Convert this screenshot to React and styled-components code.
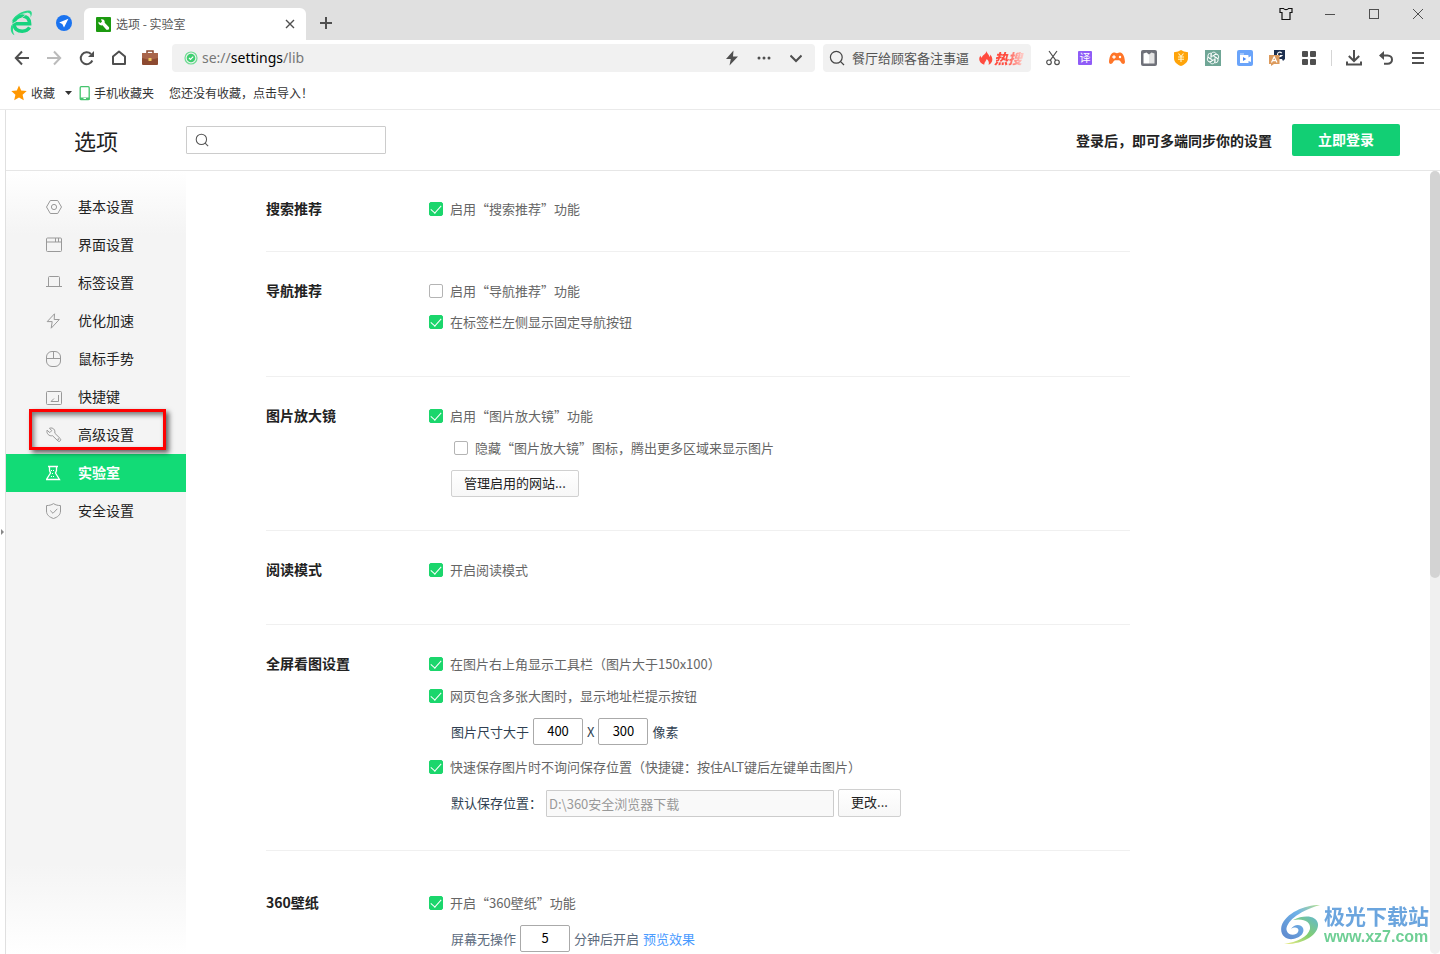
import React from "react";
import styled, { createGlobalStyle } from "styled-components";

const GlobalStyle = createGlobalStyle`
  * {
    box-sizing: border-box;
  }
  body {
    margin: 0;
    background: #fff;
    color: #222;
    font-family: "Noto Sans CJK SC", "Noto Sans", sans-serif;
    font-size: 13px;
    line-height: 20px;
  }
  button,
  input {
    font: inherit;
    color: inherit;
  }
  svg {
    display: block;
    flex: none;
  }
`;

const Window = styled.div`
  display: flex;
  flex-direction: column;
  height: 100vh;
  overflow: hidden;
`;

/* ---------- browser chrome ---------- */

const TabBar = styled.div`
  display: flex;
  height: 40px;
  background: #e0e0e0;
  padding-left: 6px;
`;

const IconButton = styled.button`
  width: ${(props) => props.$width || 32}px;
  height: ${(props) => props.$height || 28}px;
  display: flex;
  align-items: center;
  justify-content: center;
  flex: none;
  padding: 0;
  border: 0;
  background: none;
  color: ${(props) => props.$color || "#4f4f4f"};
  cursor: pointer;
`;

const PinnedTabs = styled.div`
  display: flex;
  align-items: center;
  gap: 12px;
  padding-top: 6px;
  width: 78px;
`;

const Tab = styled.div`
  display: flex;
  align-items: center;
  width: 222px;
  height: 32px;
  margin-top: 8px;
  padding-left: 12px;
  gap: 5px;
  border-radius: 6px 6px 0 0;
  background: #fff;
  font-size: 12px;
  color: #555;
`;

const TabTitle = styled.span`
  flex: 1;
`;

const NewTab = styled.div`
  padding: 9px 0 0 4px;
  flex: 1;
`;

const WindowButtons = styled.div`
  display: flex;
`;

const Toolbar = styled.div`
  display: flex;
  align-items: center;
  height: 36px;
  padding: 0 6px;
`;

const AddressBar = styled.div`
  display: flex;
  align-items: center;
  flex: 1;
  height: 28px;
  margin: 0 8px 0 6px;
  padding: 0 3px 0 12px;
  border-radius: 4px;
  background: #f1f1f1;
`;

const Url = styled.span`
  flex: 1;
  padding-left: 4px;
  font-family: "Noto Sans", sans-serif;
  font-size: 14px;
  color: #777;
  b {
    font-weight: normal;
    color: #000;
  }
`;

const QuickSearch = styled.label`
  display: flex;
  align-items: center;
  width: 208px;
  height: 28px;
  margin-right: 6px;
  padding-left: 6px;
  gap: 7px;
  border-radius: 4px;
  background: #f1f1f1;
  color: #444;
`;

const QuickSearchInput = styled.input`
  width: 120px;
  padding: 0;
  border: 0;
  outline: none;
  background: none;
  &::placeholder {
    color: #555;
    opacity: 1;
  }
`;

const HotBadge = styled.span`
  display: flex;
  align-items: center;
  gap: 1px;
  font-size: 14px;
  font-weight: 900;
  font-style: italic;
`;

const HotText = styled.span`
  padding-right: 2px;
  background: linear-gradient(90deg, #ff4b3e 40%, #ffd2ce);
  background-clip: text;
  color: transparent;
`;

const ToolbarDivider = styled.span`
  width: 1px;
  height: 16px;
  margin: 0 6px;
  background: #d5d5d5;
`;

const BookmarkBar = styled.div`
  display: flex;
  align-items: center;
  height: 34px;
  padding-left: 11px;
  border-bottom: 1px solid #eaeaea;
  font-size: 12px;
`;

const Bookmark = styled.a`
  display: flex;
  align-items: center;
  gap: 4px;
  margin-right: ${(props) => props.$space || 0}px;
  color: #333;
  text-decoration: none;
`;

/* ---------- settings page ---------- */

const Page = styled.div`
  display: flex;
  flex: 1;
  min-height: 0;
`;

const EdgeStrip = styled.button`
  display: flex;
  align-items: center;
  width: 6px;
  padding: 0;
  border: 0;
  border-right: 1px solid #e0e0e0;
  background: #fff;
`;

const Settings = styled.div`
  display: flex;
  flex-direction: column;
  flex: 1;
  min-width: 0;
`;

const Header = styled.header`
  display: flex;
  align-items: center;
  flex: none;
  height: 61px;
  padding: 0 40px 0 68px;
  border-bottom: 1px solid #e6e6e6;
`;

const Title = styled.h1`
  margin: 0 68px 0 0;
  font-size: 22px;
  line-height: 32px;
  font-weight: normal;
`;

const SearchBox = styled.label`
  display: flex;
  align-items: center;
  width: 200px;
  height: 28px;
  padding: 0 8px;
  gap: 6px;
  border: 1px solid #ccc;
  border-radius: 1px;
  color: #555;
  input {
    flex: 1;
    min-width: 0;
    border: 0;
    outline: none;
    background: none;
  }
`;

const LoginHint = styled.span`
  margin: 0 20px 0 auto;
  font-size: 14px;
  font-weight: bold;
`;

const LoginButton = styled.button`
  width: 108px;
  height: 32px;
  padding: 0 0 2px;
  border: 0;
  border-radius: 2px;
  background: #12cf74;
  color: #fff;
  font-size: 14px;
  font-weight: bold;
  cursor: pointer;
`;

const Body = styled.div`
  display: flex;
  flex: 1;
  min-height: 0;
`;

const Sidebar = styled.nav`
  flex: none;
  width: 180px;
  padding-top: 17px;
  background: linear-gradient(
    #fff,
    #f4f4f4 64px,
    #f4f4f4 calc(100% - 90px),
    #fff
  );
`;

const NavItem = styled.a`
  position: relative;
  display: flex;
  align-items: center;
  height: 38px;
  padding-left: 40px;
  gap: 16px;
  font-size: 14px;
  text-decoration: none;
  color: ${(props) => (props.$active ? "#fff" : "#222")};
  font-weight: ${(props) => (props.$active ? "bold" : "normal")};
  background: ${(props) => (props.$active ? "#12db76" : "none")};
  svg {
    color: ${(props) => (props.$active ? "#fff" : "#999")};
  }
`;

const NavText = styled.span`
  padding-bottom: 2px;
`;

const Highlight = styled.span`
  position: absolute;
  z-index: 1;
  top: -7px;
  left: 23px;
  width: 137px;
  height: 41px;
  border: 3px solid #fe0000;
  box-shadow: 3px 3px 5px rgba(0, 0, 0, 0.6),
    inset 2px 3px 5px rgba(0, 0, 0, 0.5);
  pointer-events: none;
`;

const Content = styled.main`
  flex: 1;
  min-width: 0;
  overflow: hidden;
  padding-left: 80px;
`;

const Section = styled.section`
  display: flex;
  max-width: 864px;
  padding-top: ${(props) => props.$top || 29}px;
  padding-bottom: ${(props) => props.$bottom || 44}px;
  & + & {
    border-top: 1px solid #f0f0f0;
  }
`;

const SectionTitle = styled.h2`
  width: 163px;
  margin: 0;
  font-size: 14px;
  line-height: 18px;
  font-weight: bold;
`;

const Options = styled.div`
  display: flex;
  flex-direction: column;
  align-items: flex-start;
  gap: ${(props) => props.$gap || 12}px;
`;

const CheckLabel = styled.label`
  display: flex;
  align-items: center;
  gap: 7px;
  margin-left: ${(props) => (props.$nested ? 25 : 0)}px;
  color: #666;
`;

const CheckInput = styled.input`
  appearance: none;
  display: flex;
  justify-content: center;
  width: 14px;
  height: 14px;
  margin: 0;
  border: 1px solid #b4b4b4;
  border-radius: 2px;
  background: #fff;
  &:checked {
    border-color: #1bd66c;
    background: #1bd66c;
  }
  &:checked::after {
    content: "";
    width: 5px;
    height: 9px;
    border: solid #fff;
    border-width: 0 1px 1px 0;
    transform: rotate(42deg);
  }
`;

const Line = styled.div`
  display: flex;
  align-items: center;
  gap: 4px;
  margin-left: 22px;
  color: ${(props) => props.$color || "#2f3f52"};
`;

const NumberInput = styled.input`
  width: 50px;
  height: 27px;
  padding: 0 0 2px;
  border: 1px solid #aaa;
  border-radius: 2px;
  text-align: center;
  color: #000;
`;

const PathInput = styled.input`
  width: 288px;
  height: 27px;
  padding: 0 2px;
  border: 1px solid #ccc;
  border-radius: 1px;
  background: #f9f9f9;
  color: #999;
`;

const PlainButton = styled.button`
  height: ${(props) => props.$height || 28}px;
  padding: 0 12px 2px;
  border: 1px solid #d0d0d0;
  border-radius: 2px;
  background: linear-gradient(#fff, #f7f7f7);
  color: #222;
  cursor: pointer;
`;

const PreviewLink = styled.a`
  color: #4a9bff;
  text-decoration: none;
`;

const ScrollTrack = styled.div`
  width: 10px;
  border-radius: 5px;
  background: #f0f0f0;
`;

const ScrollThumb = styled.div`
  height: 52%;
  border-radius: 5px;
  background: #d3d3d3;
`;

const Watermark = styled.div`
  position: fixed;
  right: 11px;
  bottom: 7px;
  display: flex;
  align-items: center;
  gap: 4px;
  pointer-events: none;
`;

const WatermarkName = styled.div`
  font-size: 21px;
  line-height: 24px;
  font-weight: bold;
  color: #6ba5de;
`;

const WatermarkSite = styled.div`
  font-family: "Liberation Sans", sans-serif;
  font-size: 16px;
  line-height: 20px;
  font-weight: bold;
  color: #6fcf95;
`;

/* ---------- icons ---------- */

const Icon = ({ size = 16, stroke = 1, children }) => (
  <svg
    width={size}
    height={size}
    viewBox={`0 0 ${size} ${size}`}
    fill="none"
    stroke="currentColor"
    strokeWidth={stroke}
    aria-hidden="true"
  >
    {children}
  </svg>
);

const BrowserLogo = () => (
  <svg width="24" height="26" viewBox="0 0 24 26" fill="none" aria-hidden="true">
    <path
      d="M4.5 13.8H19.6C19.6 8.8 16.5 6 12.2 6C7.6 6 4 9.2 4 13.8C4 18.5 7.5 21.2 12.2 21.2C15.5 21.2 18 20 19.6 17.4"
      stroke="#17d37f"
      strokeWidth="3.6"
    />
    <path
      d="M1.500 12C3.500 6 12 0.500 19 0.500C22.500 0.700 22.500 4.500 20.500 7.500C21 4 20 2.600 17 2.800C11 3.500 5 7.500 1.500 12Z"
      fill="#2ad98b"
    />
    <path
      d="M1.500 15C0 19 0.800 23.500 4.500 25.200C2.800 22 2.500 19.500 3.500 16.500Z"
      fill="#2ad98b"
    />
    <path d="M1 14.600C6 12 13 7.500 17.500 3.200" stroke="#e0e0e0" strokeWidth="0.800" />
  </svg>
);

const PlaneLogo = () => (
  <svg width="16" height="16" viewBox="0 0 16 16" aria-hidden="true">
    <circle cx="8" cy="8" r="8" fill="#1a73f0" />
    <path d="M12.400 3.800L3.200 7.400L6.300 9L8 12.600Z" fill="#fff" />
  </svg>
);

const WrenchLogo = () => (
  <svg width="15" height="15" viewBox="0 0 15 15" aria-hidden="true">
    <rect width="15" height="15" rx="1" fill="#1c9a10" />
    <path
      d="M2.500 4.800L4.600 6L6 4.400L4.900 2.300C7.400 1.600 9.200 3.400 8.700 5.800L13 10.200C13.600 12 12.200 13.300 10.400 12.700L6.500 8.300C4 9 2 7.200 2.500 4.800Z"
      fill="#fff"
    />
  </svg>
);

const SearchIcon = ({ size = 16 }) => (
  <svg
    width={size}
    height={size}
    viewBox="0 0 16 16"
    fill="none"
    stroke="currentColor"
    strokeWidth="1.200"
    aria-hidden="true"
  >
    <circle cx="7.300" cy="7.300" r="5.900" />
    <path d="M11.600 11.600L15 15" />
  </svg>
);

const Swirl = () => (
  <svg width="40" height="42" viewBox="0 0 40 42" aria-hidden="true">
    <defs>
      <linearGradient id="swirlBlue" x1="0" y1="1" x2="1" y2="0">
        <stop offset="0" stopColor="#5d86cc" />
        <stop offset="0.600" stopColor="#6fb2e8" />
        <stop offset="1" stopColor="#b4e08e" />
      </linearGradient>
      <linearGradient id="swirlGreen" x1="0" y1="1" x2="1" y2="0">
        <stop offset="0" stopColor="#f0ec8a" />
        <stop offset="0.500" stopColor="#84cf6c" />
        <stop offset="1" stopColor="#62b8d0" />
      </linearGradient>
    </defs>
    <path
      d="M40 1C24 1 6 9 1.500 22C-0.500 31 6 36 13 35C20 34 25 29 23 24C21 20 14 20 11 25C15 22 20 24 18 28C16 32 8 32 6.500 26C6 19 16 8 40 1Z"
      fill="url(#swirlBlue)"
    />
    <path
      d="M13 16C25 10 37 12 38 20C39 31 22 41 4 40C17 38 28 33 30 25C31 18 24 14 13 16Z"
      fill="url(#swirlGreen)"
    />
  </svg>
);

const extensions = [
  {
    name: "截图",
    icon: (
      <Icon stroke={1.2}>
        <circle cx="4" cy="12.300" r="2.300" />
        <circle cx="12" cy="12.300" r="2.300" />
        <path d="M4 1L10.800 10.400M12 1L5.200 10.400" />
      </Icon>
    ),
  },
  {
    name: "翻译",
    icon: (
      <svg width="16" height="16" viewBox="0 0 16 16">
        <rect x="1" y="1" width="14" height="14" rx="1" fill="#8f5cf7" />
        <text x="8" y="12" fontSize="11" fill="#fff" textAnchor="middle">
          译
        </text>
      </svg>
    ),
  },
  {
    name: "游戏",
    icon: (
      <svg width="16" height="16" viewBox="0 0 16 16">
        <path
          d="M4.500 2.500C6 2.300 6.500 3.200 8 3.200S10 2.300 11.500 2.500C14.500 3 15.800 8 16 12C15.800 14.600 13 14.400 12 12.200C11 10 9.800 10.200 8 10.200S5 10 4 12.200C3 14.400 0.200 14.600 0 12C0.200 8 1.500 3 4.500 2.500Z"
          fill="#ff7528"
        />
        <path d="M5 5.300V8.700M3.300 7H6.700" stroke="#fff" strokeWidth="1.300" />
        <circle cx="11" cy="7" r="1.200" fill="#fff" />
      </svg>
    ),
  },
  {
    name: "阅读",
    icon: (
      <svg width="16" height="16" viewBox="0 0 16 16">
        <rect width="16" height="16" rx="2" fill="#6f7179" />
        <path d="M2.500 3.500L5.500 2.500L8 4.500V13.500H2.500Z" fill="#fff" />
        <path d="M13.500 3.500L10.500 2.500L8 4.500V13.500H13.500Z" fill="#e4e4e4" />
      </svg>
    ),
  },
  {
    name: "优惠",
    icon: (
      <svg width="16" height="16" viewBox="0 0 16 16">
        <path
          d="M8 0L11 1.500L15 2.300V8C15 12 12 14.500 8 16C4 14.500 1 12 1 8V2.300L5 1.500Z"
          fill="#ffa40a"
        />
        <path
          d="M5.500 3.500L8 6.500L10.500 3.500M8 6.500V12M5 7H11M5 9.300H11"
          stroke="#fff3c8"
          strokeWidth="1.100"
          fill="none"
        />
      </svg>
    ),
  },
  {
    name: "AI",
    icon: (
      <svg width="16" height="16" viewBox="0 0 16 16">
        <rect width="16" height="16" fill="#6fa696" />
        <g fill="none" stroke="#fff" strokeWidth="0.900">
          {[0, 60, 120, 180, 240, 300].map((a) => (
            <path
              key={a}
              d="M6 8.500V4.800C6 1.700 10.300 1.300 11.200 4L8 5.900"
              transform={`rotate(${a} 8 8)`}
            />
          ))}
        </g>
      </svg>
    ),
  },
  {
    name: "视频",
    icon: (
      <svg width="16" height="16" viewBox="0 0 16 16">
        <rect width="16" height="16" rx="2" fill="#6aa4fa" />
        <path
          d="M3 5H10.500C11.300 5 11.500 5.400 11.500 6V7.500L14 6V12L11.500 11V13H3Z"
          fill="#fff"
        />
        <path d="M3 4H7" stroke="#d5e6ff" />
        <path d="M6 7L9.300 9L6 11Z" fill="#4a8af4" />
      </svg>
    ),
  },
  {
    name: "划词翻译",
    icon: (
      <svg width="16" height="16" viewBox="0 0 16 16">
        <path d="M5 0H16V9L14 11L13 9H5Z" fill="#1d3050" />
        <path
          d="M12.800 3.200C11 1.300 8.500 2.200 8.500 4.500S11.500 7.300 13 5.500H10.800"
          fill="none"
          stroke="#fff"
          strokeWidth="1.100"
        />
        <path d="M0 5H10.500V14H5L2 16V14H0Z" fill="#dc9a5c" />
        <path
          d="M2.500 12.500L5.200 6.800L8 12.500M3.500 10.600H7"
          fill="none"
          stroke="#fff"
          strokeWidth="1.200"
        />
      </svg>
    ),
  },
  {
    name: "全部扩展",
    icon: (
      <svg width="16" height="16" viewBox="0 0 16 16" fill="currentColor">
        <rect x="1" y="1" width="6" height="6" rx="1" />
        <rect x="9" y="1" width="6" height="6" rx="1" />
        <rect x="1" y="9" width="6" height="6" rx="1" />
        <rect x="9" y="9" width="6" height="6" rx="1" />
      </svg>
    ),
  },
];

const navItems = [
  {
    name: "基本设置",
    icon: (
      <Icon>
        <path d="M4.300 1.500H11.700L15.500 8L11.700 14.500H4.300L0.500 8Z" />
        <circle cx="8" cy="8" r="2.600" />
      </Icon>
    ),
  },
  {
    name: "界面设置",
    icon: (
      <Icon>
        <rect x="0.500" y="1" width="15" height="13.500" rx="1" />
        <path d="M0.500 5H15.500M9.500 1V5M12.500 1V5" />
      </Icon>
    ),
  },
  {
    name: "标签设置",
    icon: (
      <Icon>
        <path d="M0 11.500H16M2.500 11.500V2.500Q2.500 1.500 3.500 1.500H12.500Q13.500 1.500 13.500 2.500V11.500" />
      </Icon>
    ),
  },
  {
    name: "优化加速",
    icon: (
      <Icon>
        <path d="M8.500 0.800L1.200 8.600H6.200L5.200 15.200L13.300 6.500H8.200Z" />
      </Icon>
    ),
  },
  {
    name: "鼠标手势",
    icon: (
      <Icon>
        <rect x="0.500" y="0.500" width="14" height="15" rx="5.500" />
        <path d="M0.500 7.500H14.500M7.500 0.500V7.500" />
      </Icon>
    ),
  },
  {
    name: "快捷键",
    icon: (
      <Icon>
        <rect x="0.500" y="2.500" width="15" height="13" rx="1" />
        <path d="M12.500 6V12.500H5L8 9.500" />
      </Icon>
    ),
  },
  {
    name: "高级设置",
    highlight: true,
    icon: (
      <Icon>
        <path d="M1 3.200L3.800 5.600L5.700 3.700L3.500 1.200C7 0.200 9.500 2.700 8.800 6.200L14.200 11.500C15.700 13 13.500 15.500 12 14L6.500 8.700C3.200 9.500 0.300 6.700 1 3.200Z" />
        <circle cx="12.300" cy="12.200" r="0.500" />
      </Icon>
    ),
  },
  {
    name: "实验室",
    active: true,
    icon: (
      <Icon>
        <path
          d="M2 1.500H12M3.500 1.500V5.500M10.500 1.500V5.500L9.500 8L13.500 14.500H0.500L4.500 8L3.500 5.500"
          strokeWidth="1.300"
        />
        <path d="M5 5.500H9M6 8.500H8M5 11.500H9" strokeDasharray="1 1" />
      </Icon>
    ),
  },
  {
    name: "安全设置",
    icon: (
      <Icon>
        <path d="M7.500 0.600C9.500 2 12 2.500 14.500 2.600V8C14.500 12 11.500 14.200 7.500 15.500C3.500 14.200 0.500 12 0.500 8V2.600C3 2.500 5.500 2 7.500 0.600Z" />
        <path d="M4.200 7.500L7 10.300L11.300 5.800" />
      </Icon>
    ),
  },
];

const Check = ({ checked, nested, children }) => (
  <CheckLabel $nested={nested}>
    <CheckInput type="checkbox" defaultChecked={checked} />
    {children}
  </CheckLabel>
);

const BrowserTabs = () => (
  <TabBar>
    <PinnedTabs>
      <IconButton $width={32} aria-label="浏览器">
        <BrowserLogo />
      </IconButton>
      <IconButton $width={28} aria-label="导航">
        <PlaneLogo />
      </IconButton>
    </PinnedTabs>
    <Tab>
      <WrenchLogo />
      <TabTitle>选项 - 实验室</TabTitle>
      <IconButton aria-label="关闭标签">
        <Icon size={10} stroke={1.4}>
          <path d="M1 1L9 9M9 1L1 9" />
        </Icon>
      </IconButton>
    </Tab>
    <NewTab>
      <IconButton aria-label="新标签页">
        <Icon size={12} stroke={2}>
          <path d="M6 0V12M0 6H12" />
        </Icon>
      </IconButton>
    </NewTab>
    <WindowButtons>
      <IconButton $width={44} $color="#111" aria-label="皮肤">
        <Icon size={14} stroke={1.2}>
          <path d="M1 1.500H4.500C5.500 3 8.500 3 9.500 1.500H13V5.500H11V12.500H3V5.500H1Z" />
        </Icon>
      </IconButton>
      <IconButton $width={44} aria-label="最小化">
        <Icon size={10}>
          <path d="M0 5.500H10" />
        </Icon>
      </IconButton>
      <IconButton $width={44} aria-label="最大化">
        <Icon size={10}>
          <rect x="0.500" y="0.500" width="9" height="9" />
        </Icon>
      </IconButton>
      <IconButton $width={44} aria-label="关闭">
        <Icon size={12}>
          <path d="M1 1L11 11M11 1L1 11" />
        </Icon>
      </IconButton>
    </WindowButtons>
  </TabBar>
);

const NavigationBar = () => (
  <Toolbar>
    <IconButton aria-label="后退">
      <Icon stroke={2}>
        <path d="M15 8H2M8 1.500L1.800 8L8 14.500" />
      </Icon>
    </IconButton>
    <IconButton $color="#bbb" aria-label="前进">
      <Icon stroke={2}>
        <path d="M1 8H14M8 1.500L14.200 8L8 14.500" />
      </Icon>
    </IconButton>
    <IconButton aria-label="刷新">
      <Icon stroke={2}>
        <path d="M14.300 10.500A6 6 0 1 1 13 4" />
        <path d="M16 1V7H10Z" fill="currentColor" stroke="none" />
      </Icon>
    </IconButton>
    <IconButton aria-label="主页">
      <Icon stroke={2}>
        <path d="M3 6.500L9 1.500L15 6.500V14H3Z" strokeLinejoin="round" />
      </Icon>
    </IconButton>
    <IconButton aria-label="工具箱">
      <svg width="16" height="16" viewBox="0 0 16 16">
        <path d="M5 3V1H11V3" fill="none" stroke="#8a4a30" strokeWidth="1.500" />
        <rect y="3" width="16" height="12" rx="1" fill="#8d4a30" />
        <path d="M0 4Q0 3 1 3H15Q16 3 16 4V8L8 10L0 8Z" fill="#a9654a" />
        <rect x="6.500" y="8" width="3" height="3" fill="#f0c860" />
      </svg>
    </IconButton>
    <AddressBar>
      <svg width="14" height="14" viewBox="0 0 14 14" aria-hidden="true">
        <circle cx="7" cy="7" r="6" fill="none" stroke="#6fdc93" strokeWidth="1.200" />
        <circle cx="7" cy="7" r="4.300" fill="#3fcf70" />
        <path d="M5 7L6.500 8.500L9.200 5.700" fill="none" stroke="#fff" strokeWidth="1.200" />
      </svg>
      <Url>
        se://<b>settings</b>/lib
      </Url>
      <IconButton aria-label="极速模式">
        <Icon>
          <path d="M9.500 0.500L2 9H6.800L5.500 15.500L14 6.500H9Z" fill="currentColor" stroke="none" />
        </Icon>
      </IconButton>
      <IconButton aria-label="更多">
        <svg width="14" height="4" viewBox="0 0 14 4" fill="currentColor">
          <circle cx="2" cy="2" r="1.500" />
          <circle cx="7" cy="2" r="1.500" />
          <circle cx="12" cy="2" r="1.500" />
        </svg>
      </IconButton>
      <IconButton aria-label="展开">
        <Icon size={12} stroke={2}>
          <path d="M0.500 3.500L6 9L11.500 3.500" />
        </Icon>
      </IconButton>
    </AddressBar>
    <QuickSearch>
      <SearchIcon />
      <QuickSearchInput aria-label="搜索" placeholder="餐厅给顾客备注事逼" />
      <HotBadge>
        <svg width="14" height="14" viewBox="0 0 14 14" aria-hidden="true">
          <path
            d="M7.500 0C8 3 10.500 3.500 10.300 6C11.200 5.500 11.300 4.500 11.200 3.500C14.500 7 14 12 9.500 13.800C10.500 11.500 9.500 9.500 7.500 8C7.500 10 5.500 10.500 5.200 13.800C0.500 12.500-1.200 8 1.500 4.500C1.700 6 2.200 6.500 3 6.500C3 4 6.800 3.500 7.500 0Z"
            fill="#ff4b3e"
          />
        </svg>
        <HotText>热搜</HotText>
      </HotBadge>
    </QuickSearch>
    {extensions.map((item) => (
      <IconButton key={item.name} aria-label={item.name}>
        {item.icon}
      </IconButton>
    ))}
    <ToolbarDivider />
    <IconButton aria-label="下载">
      <Icon stroke={2}>
        <path d="M8 0V11M2.800 6L8 11L13.200 6M1 11.500V14.500H15V11.500" />
      </Icon>
    </IconButton>
    <IconButton aria-label="恢复">
      <Icon stroke={2}>
        <path d="M2.500 5.500H9.500C15.500 5.500 15.500 13.800 9.500 13.800H6" />
        <path d="M6 1V10L1 5.500Z" fill="currentColor" stroke="none" />
      </Icon>
    </IconButton>
    <IconButton aria-label="菜单">
      <Icon size={12} stroke={2}>
        <path d="M0 1H12M0 6H12M0 11H12" />
      </Icon>
    </IconButton>
  </Toolbar>
);

const Bookmarks = () => (
  <BookmarkBar>
    <Bookmark href="#favorites" $space={10}>
      <svg width="16" height="16" viewBox="0 0 16 16" aria-hidden="true">
        <path
          d="M8 0.500L10.200 5.500L15.700 6L11.600 9.800L12.800 15.300L8 12.500L3.200 15.300L4.400 9.800L0.300 6L5.800 5.500Z"
          fill="#ff9700"
        />
      </svg>
      收藏
    </Bookmark>
    <Bookmark href="#mobile" $space={15}>
      <svg width="25" height="16" viewBox="0 0 25 16" aria-hidden="true">
        <path d="M0 6H7L3.500 10Z" fill="#333" />
        <rect x="15.200" y="1.700" width="9" height="13" rx="1" fill="#fff" stroke="#45c46d" strokeWidth="1.300" />
        <path d="M15 12.500H24.500V15H15Z" fill="#45c46d" />
        <path d="M18.500 13.500H21" stroke="#fff" />
      </svg>
      手机收藏夹
    </Bookmark>
    <Bookmark href="#import">您还没有收藏，点击导入！</Bookmark>
  </BookmarkBar>
);

const SettingsSections = () => (
  <Content>
    <Section $top={28} $bottom={32}>
      <SectionTitle>搜索推荐</SectionTitle>
      <Options>
        <Check checked>启用“搜索推荐”功能</Check>
      </Options>
    </Section>
    <Section>
      <SectionTitle>导航推荐</SectionTitle>
      <Options $gap={11}>
        <Check>启用“导航推荐”功能</Check>
        <Check checked>在标签栏左侧显示固定导航按钮</Check>
      </Options>
    </Section>
    <Section $bottom={33}>
      <SectionTitle>图片放大镜</SectionTitle>
      <Options>
        <Check checked>启用“图片放大镜”功能</Check>
        <Check nested>隐藏“图片放大镜”图标，腾出更多区域来显示图片</Check>
        <Line>
          <PlainButton $height={27}>管理启用的网站...</PlainButton>
        </Line>
      </Options>
    </Section>
    <Section>
      <SectionTitle>阅读模式</SectionTitle>
      <Options>
        <Check checked>开启阅读模式</Check>
      </Options>
    </Section>
    <Section $bottom={33}>
      <SectionTitle>全屏看图设置</SectionTitle>
      <Options>
        <Check checked>在图片右上角显示工具栏（图片大于150x100）</Check>
        <Check checked>网页包含多张大图时，显示地址栏提示按钮</Check>
        <Line>
          <label htmlFor="minWidth">图片尺寸大于</label>
          <NumberInput id="minWidth" defaultValue="400" />
          <label htmlFor="minHeight">X</label>
          <NumberInput id="minHeight" defaultValue="300" />
          像素
        </Line>
        <Check checked>
          快速保存图片时不询问保存位置（快捷键：按住ALT键后左键单击图片）
        </Check>
        <Line>
          <label htmlFor="savePath">默认保存位置：</label>
          <PathInput id="savePath" defaultValue="D:\360安全浏览器下载" readOnly />
          <PlainButton>更改...</PlainButton>
        </Line>
      </Options>
    </Section>
    <Section $top={42} $bottom={2}>
      <SectionTitle>360壁纸</SectionTitle>
      <Options>
        <Check checked>开启“360壁纸”功能</Check>
        <Line $color="#5c6b7d">
          <label htmlFor="idle">屏幕无操作</label>
          <NumberInput id="idle" defaultValue="5" />
          分钟后开启
          <PreviewLink href="#preview">预览效果</PreviewLink>
        </Line>
      </Options>
    </Section>
  </Content>
);

const App = () => {
  return (
    <Window lang="zh-CN">
      <GlobalStyle />
      <BrowserTabs />
      <NavigationBar />
      <Bookmarks />
      <Page>
        <EdgeStrip aria-label="展开侧栏">
          <svg width="5" height="6" viewBox="0 0 5 6">
            <path d="M1 0L4 3L1 6Z" fill="#888" />
          </svg>
        </EdgeStrip>
        <Settings>
          <Header>
            <Title>选项</Title>
            <SearchBox>
              <SearchIcon size={14} />
              <input type="text" aria-label="搜索设置" />
            </SearchBox>
            <LoginHint>登录后，即可多端同步你的设置</LoginHint>
            <LoginButton>立即登录</LoginButton>
          </Header>
          <Body>
            <Sidebar>
              {navItems.map((item) => (
                <NavItem key={item.name} href="#settings" $active={item.active}>
                  {item.icon}
                  <NavText>{item.name}</NavText>
                  {item.highlight && <Highlight />}
                </NavItem>
              ))}
            </Sidebar>
            <SettingsSections />
            <ScrollTrack>
              <ScrollThumb />
            </ScrollTrack>
          </Body>
        </Settings>
      </Page>
      <Watermark>
        <Swirl />
        <div>
          <WatermarkName>极光下载站</WatermarkName>
          <WatermarkSite>www.xz7.com</WatermarkSite>
        </div>
      </Watermark>
    </Window>
  );
};

export default App;
